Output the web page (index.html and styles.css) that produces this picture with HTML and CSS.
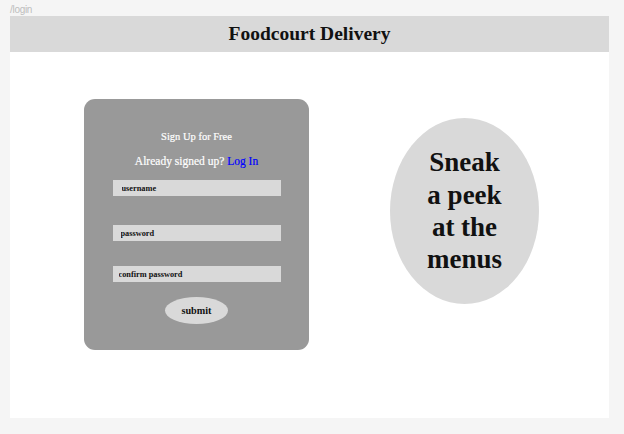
FILE: index.html
```html
<!DOCTYPE html>
<html lang="en">
<head>
<meta charset="utf-8">
<title>Foodcourt Delivery</title>
<link rel="stylesheet" href="styles.css">
</head>
<body>
<div class="route">/login</div>
<div class="frame">
  <header class="topbar">Foodcourt Delivery</header>
  <main class="content">
    <form class="card">
      <div class="card-title">Sign Up for Free</div>
      <div class="card-sub">Already signed up? <a class="login-link" href="#">Log In</a></div>
      <input class="field field-user" type="text" placeholder="username">
      <input class="field field-pass" type="password" placeholder="password">
      <input class="field field-confirm" type="password" placeholder="confirm password">
      <button class="submit" type="button">submit</button>
    </form>
    <div class="peek">Sneak<br>a peek<br>at the<br>menus</div>
  </main>
</div>
</body>
</html>
```

FILE: styles.css
```css
html, body {
  margin: 0;
  padding: 0;
}
body {
  background: #f5f5f5;
  padding: 4px 15px 16px 10px;
  font-family: "Liberation Serif", "Times New Roman", serif;
}
.route {
  font-family: "Liberation Sans", Arial, sans-serif;
  font-size: 10px;
  line-height: 12px;
  height: 12px;
  color: #bdbdbd;
  letter-spacing: -0.3px;
}
.frame {
  width: 599px;
  height: 402px;
  background: #ffffff;
  display: flex;
  flex-direction: column;
}
.topbar {
  height: 36px;
  background: #d9d9d9;
  display: flex;
  align-items: center;
  justify-content: center;
  font-size: 19.5px;
  font-weight: bold;
  color: #111;
}
.content {
  display: flex;
  align-items: flex-start;
  padding: 47px 0 0 74px;
}
.card {
  width: 225px;
  height: 251px;
  background: #999999;
  border-radius: 11px;
  display: flex;
  flex-direction: column;
  align-items: center;
  box-sizing: border-box;
  padding-top: 31px;
  margin: 0;
}
.card-title {
  color: #ffffff;
  font-size: 10.5px;
  line-height: 14px;
  -webkit-text-stroke: 0.2px #ffffff;
}
.card-sub {
  color: #ffffff;
  font-size: 11.5px;
  line-height: 14px;
  margin-top: 10px;
  -webkit-text-stroke: 0.2px #ffffff;
}
.login-link {
  color: #0000ff;
  text-decoration: none;
  -webkit-text-stroke: 0.2px #0000ff;
}
.field {
  width: 168px;
  height: 16px;
  box-sizing: border-box;
  border: none;
  outline: none;
  background: #d9d9d9;
  font-family: "Liberation Serif", "Times New Roman", serif;
  font-weight: bold;
  font-size: 8.3px;
  color: #111;
  padding: 0 0 0 9px;
  margin: 0;
}
.field::placeholder {
  color: #111;
  opacity: 1;
}
.field-user {
  margin-top: 12px;
}
.field-pass {
  margin-top: 29px;
  padding-left: 8px;
}
.field-confirm {
  margin-top: 25px;
  padding-left: 6px;
}
.submit {
  margin-top: 15px;
  width: 63px;
  height: 27px;
  border: none;
  border-radius: 50%;
  background: #d9d9d9;
  font-family: "Liberation Serif", "Times New Roman", serif;
  font-weight: bold;
  font-size: 10.2px;
  color: #111;
  padding: 0;
}
.peek {
  margin: 19px 0 0 81px;
  width: 149px;
  height: 186px;
  border-radius: 50%;
  background: #d9d9d9;
  display: flex;
  align-items: center;
  justify-content: center;
  text-align: center;
  font-size: 27px;
  font-weight: bold;
  line-height: 32.3px;
  color: #111;
}
```
